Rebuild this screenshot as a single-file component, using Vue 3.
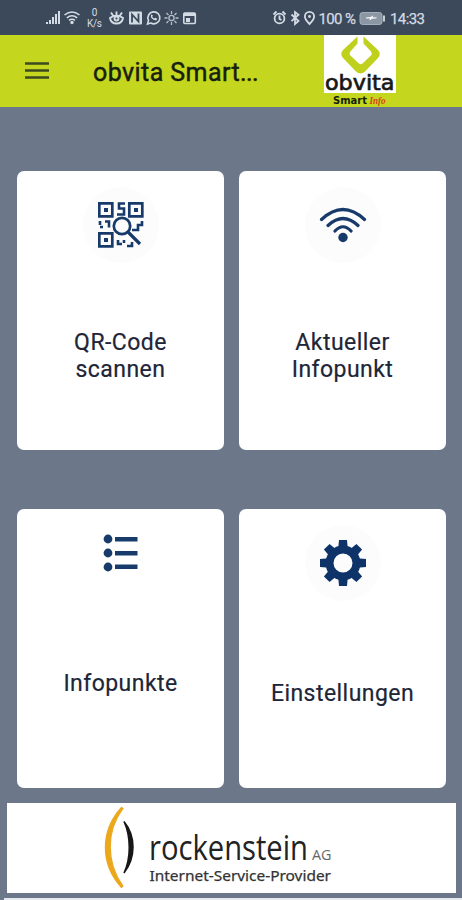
<script setup>
const cards = [
  { id: 'qr', lines: ['QR-Code', 'scannen'] },
  { id: 'wifi', lines: ['Aktueller', 'Infopunkt'] },
  { id: 'list', lines: ['Infopunkte'] },
  { id: 'gear', lines: ['Einstellungen'] },
]
const gearAngles = [0, 45, 90, 135, 180, 225, 270, 315]
</script>

<template>
  <div class="screen">
    <header class="status">
      <svg class="status-left" width="152" height="35" viewBox="46 0 152 35">
        <g fill="#d3dbe4">
          <path d="M46 22h2v2h-2zM49 20h2v4h-2zM52 17h2v7h-2zM55 14h2v10h-2zM58 11h2v13h-2z" />
          <circle cx="72" cy="22.5" r="1.7" />
        </g>
        <g fill="none" stroke="#d3dbe4" stroke-width="1.6">
          <path d="M64.5 15q7.500-6 15 0M66.800 17.800q5.200-4 10.400 0M69 20.400q3-2.200 6 0" />
        </g>
        <text x="94.500" y="16" class="tiny" text-anchor="middle">0</text>
        <text x="94.500" y="27" class="tiny" text-anchor="middle" textLength="15">K/s</text>
        <g fill="none" stroke="#d3dbe4" stroke-width="1.900">
          <path d="M110 18q6.500-5 13 0q-1 5.500-6.500 5.500t-6.500-5.500zM111 12.500l2 3M122 12.500l-2 3M116.500 11.500v3" />
          <circle cx="116.500" cy="18.500" r="2" />
        </g>
        <rect x="129" y="11.500" width="13" height="13" rx="1" fill="#d3dbe4" />
        <path d="M132 22.500v-8l6.500 7v-8" fill="none" stroke="#3c495a" stroke-width="1.800" />
        <path d="M147.500 24l1-3.500a6 6 0 1 1 2.300 2.500z" fill="none" stroke="#d3dbe4" stroke-width="1.600" />
        <path d="M151 14.500q-1 5 5.200 6l1-1.800-2-1-1 .8q-1.500-.6-2-2l.8-1z" fill="#d3dbe4" />
        <g stroke="#b5c0cb" fill="none" stroke-width="1.300">
          <circle cx="171.500" cy="18" r="2.600" />
          <path d="M171.500 11v3M171.500 22v3M164.500 18h3M175.500 18h3M166.500 13l2 2M176.500 13l-2 2M166.500 23l2-2M176.500 23l-2-2" />
        </g>
        <rect x="183.800" y="13" width="11.500" height="10.500" rx="1" fill="none" stroke="#d3dbe4" stroke-width="1.600" />
        <path d="M184 13h11v3h-11zM186 18h4v4h-4z" fill="#d3dbe4" />
      </svg>
      <svg class="status-right" width="154" height="35" viewBox="272 0 154 35">
        <g fill="none" stroke="#d3dbe4" stroke-width="1.800">
          <circle cx="279.500" cy="18.500" r="4.900" />
          <path d="M273.500 14.500l3-3M285.500 14.500l-3-3M279.500 15.500v3.500l2 1" />
          <path d="M291.500 14.500l7 6.500-3.500 3v-12l3.500 2.700-7 6.500" />
          <path d="M309.500 24q-4.600-4.500-4.600-7.500a4.600 4.600 0 0 1 9.200 0q0 3-4.600 7.500z" />
        </g>
        <circle cx="309.500" cy="16.500" r="1.400" fill="#d3dbe4" />
        <text x="318.500" y="23.500" class="status-text" textLength="37.500">100 %</text>
        <rect x="360" y="12.500" width="22" height="12" rx="2.500" fill="#8c97a4" stroke="#a5afba" />
        <path d="M383 15.500h2v6h-2z" fill="#c5ced7" />
        <path d="M366 18l5-.7 1.500-1.500v2h4l-5 .8-1.500 1.500v-2z" fill="#fff" stroke="#fff" stroke-width=".6" />
        <text x="390" y="23.500" class="status-text" textLength="35">14:33</text>
      </svg>
    </header>

    <nav class="bar">
      <svg class="menu" width="24" height="20" viewBox="0 0 24 20">
        <path d="M0 2.500h24M0 9.500h24M0 16.500h24" stroke="#3c4a20" stroke-width="2.300" />
      </svg>
      <h1>obvita Smart<span class="dots">...</span></h1>
      <svg class="brand" width="72" height="72" viewBox="0 0 72 72">
        <path d="M0 0h72v58H0z" fill="#fff" />
        <path d="M33.500 1.500L19 15q-3.500 4 0 8l13 13.500q4.500 4 9 0L54 23q3.500-4 0-8L39.500 1.500v7l7.500 8q1.500 2 0 4l-8.500 8q-1.800 1.500-3.600 0l-8.500-8q-1.500-2 0-4l7.100-8z" fill="#bfd01d" />
        <text x="1" y="55" class="brand-name" textLength="69.500" lengthAdjust="spacingAndGlyphs">obvita</text>
        <text x="9" y="68.500" class="brand-smart" textLength="34" lengthAdjust="spacingAndGlyphs">Smart</text>
        <text x="45.500" y="68.500" class="brand-info" textLength="16" lengthAdjust="spacingAndGlyphs">Info</text>
      </svg>
    </nav>

    <main class="grid">
      <button v-for="card in cards" :key="card.id" class="card" :class="card.id">
        <span class="disc">
          <svg v-if="card.id === 'qr'" width="46" height="48" viewBox="0 0 46 48">
            <g fill="none" stroke="#173a6b" stroke-width="2.700">
              <path d="M1.300 2.300h13v13h-13zM31.300 2.300h13v13h-13zM1.300 32.300h13v13h-13z" />
              <path d="M27 2.500h-6v5h5v6h-7M2 20v4M7 20.500h4v6M2 26h3M44 20v4h-4v5h-5M20 39v4h4M29 45h5v-4M26 39v3M34 29h5" stroke-width="2.600" />
              <circle cx="24" cy="25" r="8.200" />
              <path d="M30 31l12 12" stroke-width="3.200" />
            </g>
            <path d="M6 7h4v4H6zM36 7h4v4h-4zM6 37h4v4H6z" fill="#173a6b" />
          </svg>
          <svg v-else-if="card.id === 'wifi'" width="48" height="40" viewBox="0 0 48 40">
            <g fill="none" stroke="#173a6b" stroke-width="3.200" stroke-linecap="round">
              <path d="M2.500 14.500Q24-5.500 45.500 14.500M9 20.500Q24 6.500 39 20.500M16 26Q24 17.500 32 26" />
            </g>
            <circle cx="24" cy="32.500" r="4.700" fill="#173a6b" />
          </svg>
          <svg v-else-if="card.id === 'list'" width="36" height="38" viewBox="0 0 36 38">
            <g fill="#173c6c">
              <circle cx="5" cy="5" r="4.400" /><circle cx="5" cy="19" r="4.400" /><circle cx="5" cy="33" r="4.400" />
              <path d="M12 3h22.500v4.500H12zM12 17h22.500v4.500H12zM12 30.500h22.500V35H12z" />
            </g>
          </svg>
          <svg v-else width="48" height="48" viewBox="-24 -24 48 48">
            <path
              v-for="angle in gearAngles"
              :key="angle"
              d="M-4.800-14l.8-9h8l.8 9z"
              fill="#0d3368"
              :transform="`rotate(${angle})`"
            />
            <circle r="13.500" fill="none" stroke="#0d3368" stroke-width="8" />
          </svg>
        </span>
        <span class="label">
          <span v-for="line in card.lines" :key="line">{{ line }}</span>
        </span>
      </button>
    </main>

    <footer class="sponsor">
      <svg width="449" height="90" viewBox="7 803 449 90">
        <path d="M121.500 807.500C100 831 100 864 121.500 887.500L123 886C106 863 106 831 123 808.500z" fill="#eba81c" stroke="#eba81c" stroke-width="1.200" />
        <path d="M124 821.500C136 836 136 858 124 873C131 858 131 837 124 821.500z" fill="#171717" stroke="#171717" stroke-width="1.500" />
        <text x="149" y="860" class="sponsor-name" textLength="159" lengthAdjust="spacingAndGlyphs">rockenstein</text>
        <text x="312" y="860" class="sponsor-ag" textLength="19.500" lengthAdjust="spacingAndGlyphs">AG</text>
        <text x="149.500" y="880.500" class="sponsor-sub" textLength="181.500" lengthAdjust="spacingAndGlyphs">Internet-Service-Provider</text>
      </svg>
    </footer>
    <div class="edge"></div>
  </div>
</template>

<style>
body { margin: 0; }
</style>

<style scoped>
.screen {
  width: 462px;
  height: 900px;
  overflow: hidden;
  display: flex;
  flex-direction: column;
  background: #6c7889;
  font-family: Roboto, "Liberation Sans", sans-serif;
}
svg { display: block; flex: none; }
.status {
  height: 35px;
  flex: none;
  display: flex;
  justify-content: space-between;
  padding: 0 36px 0 46px;
  background: #3c495a;
}
.tiny { font-size: 10px; fill: #d3dbe4; }
.status-text { font-size: 15px; fill: #d3dbe4; stroke: #d3dbe4; stroke-width: .25; }
.bar {
  height: 72px;
  flex: none;
  display: flex;
  align-items: center;
  padding: 0 66px 0 25px;
  background: #c4d61e;
}
h1 {
  margin: 3px auto 0 44px;
  font-size: 25px;
  font-weight: 400;
  line-height: 30px;
  letter-spacing: .42px;
  color: #17200e;
  -webkit-text-stroke: .45px #17200e;
}
.dots { letter-spacing: -.6px; }
.brand-name { font: 21px "DejaVu Sans", sans-serif; fill: #171717; stroke: #171717; stroke-width: .7; }
.brand-smart { font: bold 10.500px "DejaVu Sans", sans-serif; fill: #171f08; }
.brand-info { font: italic bold 11px "Liberation Serif", serif; fill: #d44516; }
.grid {
  display: grid;
  grid-template-columns: 207px 207px;
  grid-auto-rows: 279px;
  gap: 59px 15px;
  padding: 64px 16px 0 17px;
}
.card {
  display: flex;
  flex-direction: column;
  align-items: center;
  padding: 16px 0 0;
  border: 0;
  border-radius: 7px;
  background: #fff;
  font-family: inherit;
}
.disc {
  width: 76px;
  height: 76px;
  display: flex;
  align-items: center;
  justify-content: center;
  border-radius: 50%;
  background: #fcfcfc;
}
.label {
  display: flex;
  flex-direction: column;
  margin-top: 66px;
  font-size: 23px;
  font-weight: 400;
  line-height: 27px;
  letter-spacing: .45px;
  color: #202538;
  -webkit-text-stroke: .2px #202538;
}
.list { padding-top: 6px; }
.list .disc { background: #fff; }
.list .label { margin-top: 79px; }
.gear .label { margin-top: 79px; }
.sponsor {
  width: 449px;
  height: 90px;
  flex: none;
  margin: 15px 0 0 7px;
  background: #fff;
}
.sponsor-name { font: 35px "Open Sans", sans-serif; fill: #222; }
.sponsor-ag { font: 14px "Open Sans", sans-serif; fill: #666; }
.sponsor-sub { font: 15px "Noto Sans", sans-serif; fill: #333; stroke: #333; stroke-width: .25; }
.edge { height: 2px; flex: none; margin: 5px 0 0 4px; background: #e5e9ec; }
</style>
